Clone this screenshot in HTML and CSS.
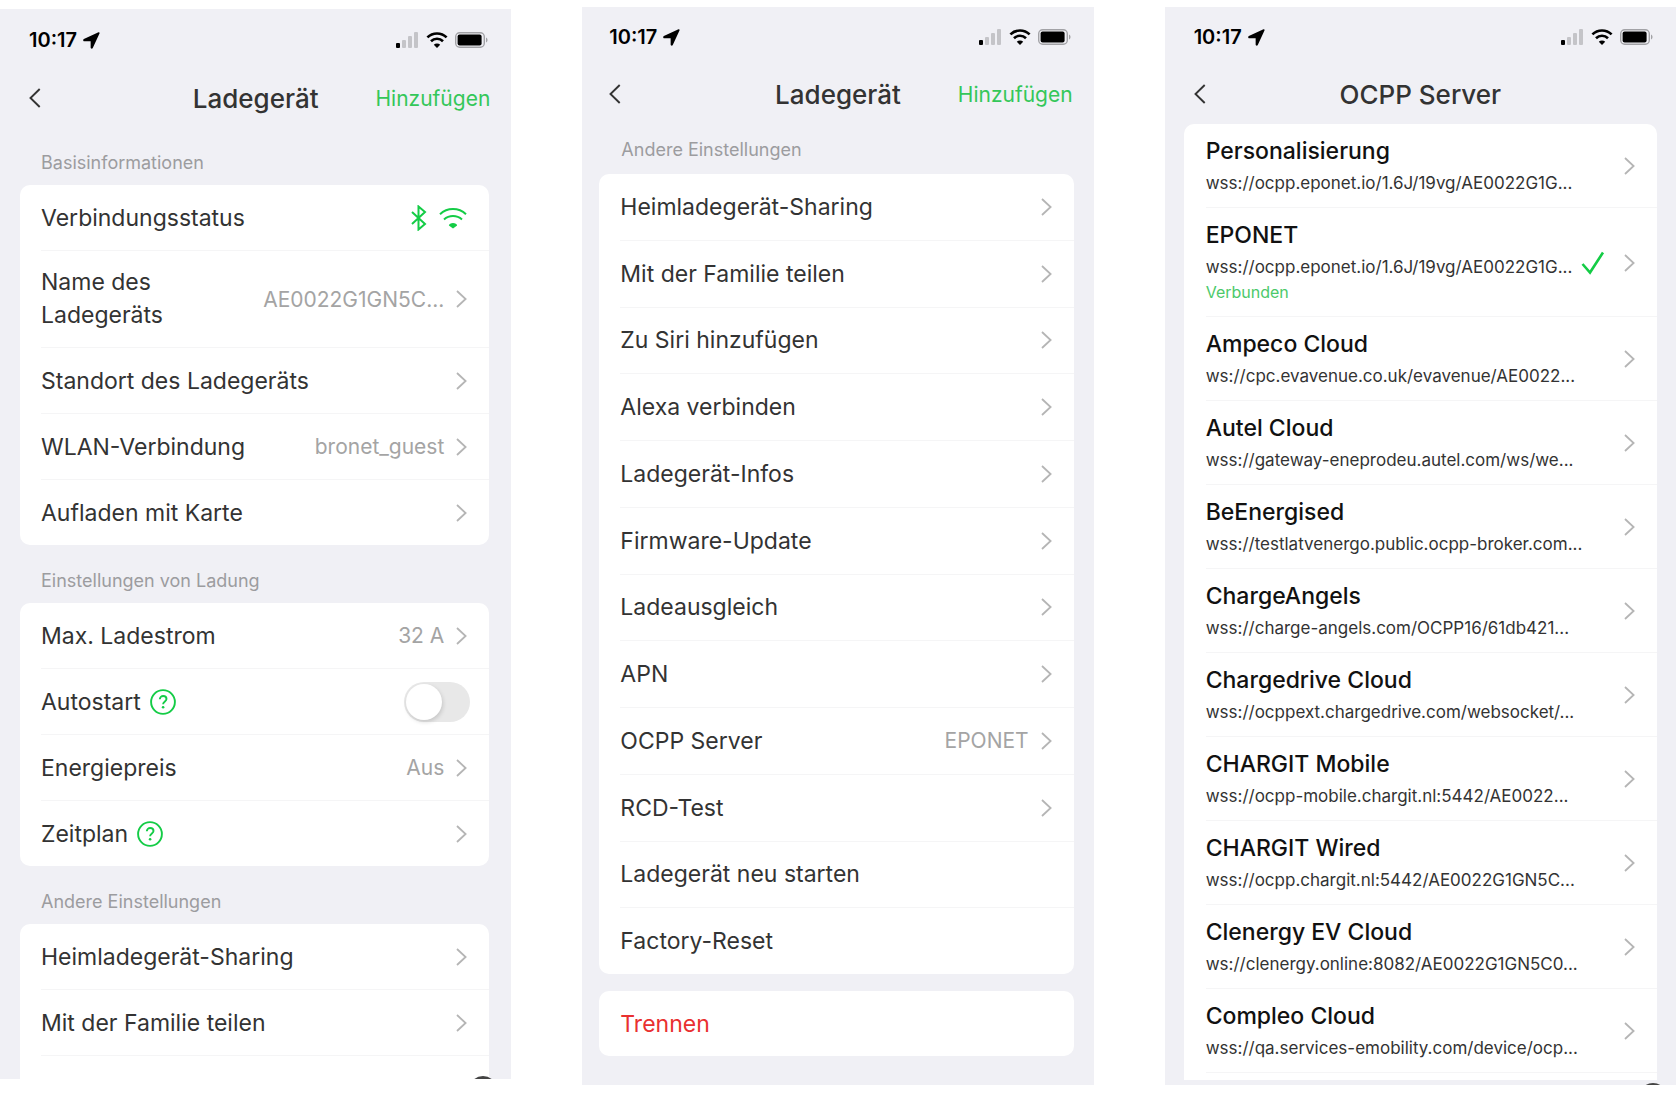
FILE: index.html
```html
<!DOCTYPE html>
<html lang="de">
<head>
  <meta charset="UTF-8">
  <meta name="viewport" content="width=device-width, initial-scale=1.0">
  <title>Ladegerät</title>
  <link rel="stylesheet" href="styles.css">
</head>
<body>
  <!-- shared icons -->
  <svg class="sprite" aria-hidden="true">
    <symbol id="arrow" viewBox="0 0 16 16"><path d="M14.600.3.8 6.700c-1 .5-.8 1.900.4 1.900h6v6.100c0 1.200 1.500 1.500 2 .4l6.300-13.700c.4-.8-.2-1.400-.9-1.100z"/></symbol>
    <symbol id="signal" viewBox="0 0 23 16">
      <rect x="0" y="11" width="4" height="5" rx="1"/>
      <g fill="#c4c4c8"><rect x="6" y="8" width="4" height="8" rx="1"/><rect x="12" y="4" width="4" height="12" rx="1"/><rect x="18" y="0" width="4" height="16" rx="1"/></g>
    </symbol>
    <symbol id="wifi" viewBox="0 0 22 16">
      <path d="M1.4 5.4a13.6 13.6 0 0 1 19.2 0M5 9.2a8.6 8.6 0 0 1 12 0" fill="none" stroke="currentColor" stroke-width="2.6"/>
      <path d="M11 16l-3.2-3.3a4.6 4.6 0 0 1 6.4 0z"/>
    </symbol>
    <symbol id="battery" viewBox="0 0 33 16">
      <rect x=".7" y=".7" width="28.6" height="14.6" rx="4" fill="none" stroke="#a2a2a6" stroke-width="1.4"/>
      <rect x="2.6" y="2.6" width="24" height="10.8" rx="2"/>
      <path d="M31 5.5c2 .8 2 4.2 0 5z" fill="#a2a2a6"/>
    </symbol>
    <symbol id="back" viewBox="0 0 12 20"><path d="M10.7 1 1.5 10l9.2 9" fill="none" stroke="currentColor" stroke-width="1.9"/></symbol>
    <symbol id="chevron" viewBox="0 0 11 18"><path d="M1 1l8.6 8L1 17" fill="none" stroke="currentColor" stroke-width="1.8"/></symbol>
    <symbol id="bluetooth" viewBox="0 0 16 26"><path d="M1 7l13 12-6.500 5.500V1.500L14 7 1 19" fill="none" stroke="currentColor" stroke-width="2"/></symbol>
    <symbol id="wlan" viewBox="0 0 28 22">
      <path d="M1 7.2a19 19 0 0 1 26 0M5 12.4a13.4 13.4 0 0 1 18 0" fill="none" stroke="currentColor" stroke-width="2"/>
      <path d="M14 21.5 9.900 18.500c0-3.500 8.200-3.500 8.200 0z"/>
    </symbol>
    <symbol id="help" viewBox="0 0 26 26">
      <circle cx="13" cy="13" r="11.9" fill="none" stroke="currentColor" stroke-width="1.9"/>
      <path d="M9.800 10.300c0-4.400 6.700-4.200 6.700-.2 0 2.300-3.400 2.500-3.400 5.200" fill="none" stroke="currentColor" stroke-width="1.9"/>
      <circle cx="13.100" cy="18.300" r="1.300"/>
    </symbol>
    <symbol id="check" viewBox="0 0 24 24"><path d="M1.500 13 9 21.500 22 1.500" fill="none" stroke="currentColor" stroke-width="2.600"/></symbol>
  </svg>

  <main class="screens">

    <section class="screen screen-charger">
      <div class="status-bar">
        <span class="time">10:17</span>
        <svg class="icon-arrow"><use href="#arrow"/></svg>
        <svg class="icon-signal"><use href="#signal"/></svg>
        <svg class="icon-wifi"><use href="#wifi"/></svg>
        <svg class="icon-battery"><use href="#battery"/></svg>
      </div>
      <header class="nav">
        <button class="back" aria-label="Zurück"><svg><use href="#back"/></svg></button>
        <h1>Ladegerät</h1>
        <button class="add">Hinzufügen</button>
      </header>

      <h2>Basisinformationen</h2>
      <div class="card">
        <div class="row">
          <span class="label">Verbindungsstatus</span>
          <svg class="icon-bluetooth"><use href="#bluetooth"/></svg>
          <svg class="icon-wlan"><use href="#wlan"/></svg>
        </div>
        <a class="row row-tall" href="#"><span class="label">Name des Ladegeräts</span><span class="value">AE0022G1GN5C...</span><svg class="chevron"><use href="#chevron"/></svg></a>
        <a class="row" href="#"><span class="label">Standort des Ladegeräts</span><svg class="chevron"><use href="#chevron"/></svg></a>
        <a class="row" href="#"><span class="label">WLAN-Verbindung</span><span class="value">bronet_guest</span><svg class="chevron"><use href="#chevron"/></svg></a>
        <a class="row" href="#"><span class="label">Aufladen mit Karte</span><svg class="chevron"><use href="#chevron"/></svg></a>
      </div>

      <h2>Einstellungen von Ladung</h2>
      <div class="card">
        <a class="row" href="#"><span class="label">Max. Ladestrom</span><span class="value">32 A</span><svg class="chevron"><use href="#chevron"/></svg></a>
        <div class="row">
          <label for="autostart">Autostart</label>
          <button class="help" aria-label="Hilfe"><svg><use href="#help"/></svg></button>
          <input type="checkbox" class="switch" id="autostart">
        </div>
        <a class="row" href="#"><span class="label">Energiepreis</span><span class="value">Aus</span><svg class="chevron"><use href="#chevron"/></svg></a>
        <div class="row">
          <span>Zeitplan</span>
          <button class="help" aria-label="Hilfe"><svg><use href="#help"/></svg></button>
          <a class="go" href="#" aria-label="Zeitplan"><svg class="chevron"><use href="#chevron"/></svg></a>
        </div>
      </div>

      <h2>Andere Einstellungen</h2>
      <div class="card card-cut">
        <a class="row" href="#"><span class="label">Heimladegerät-Sharing</span><svg class="chevron"><use href="#chevron"/></svg></a>
        <a class="row" href="#"><span class="label">Mit der Familie teilen</span><svg class="chevron"><use href="#chevron"/></svg></a>
      </div>
      <span class="float-dot"></span>
    </section>

    <section class="screen screen-other">
      <div class="status-bar">
        <span class="time">10:17</span>
        <svg class="icon-arrow"><use href="#arrow"/></svg>
        <svg class="icon-signal"><use href="#signal"/></svg>
        <svg class="icon-wifi"><use href="#wifi"/></svg>
        <svg class="icon-battery"><use href="#battery"/></svg>
      </div>
      <header class="nav">
        <button class="back" aria-label="Zurück"><svg><use href="#back"/></svg></button>
        <h1>Ladegerät</h1>
        <button class="add">Hinzufügen</button>
      </header>

      <h2>Andere Einstellungen</h2>
      <div class="card card-fill">
        <a class="row" href="#"><span class="label">Heimladegerät-Sharing</span><svg class="chevron"><use href="#chevron"/></svg></a>
        <a class="row" href="#"><span class="label">Mit der Familie teilen</span><svg class="chevron"><use href="#chevron"/></svg></a>
        <a class="row" href="#"><span class="label">Zu Siri hinzufügen</span><svg class="chevron"><use href="#chevron"/></svg></a>
        <a class="row" href="#"><span class="label">Alexa verbinden</span><svg class="chevron"><use href="#chevron"/></svg></a>
        <a class="row" href="#"><span class="label">Ladegerät-Infos</span><svg class="chevron"><use href="#chevron"/></svg></a>
        <a class="row" href="#"><span class="label">Firmware-Update</span><svg class="chevron"><use href="#chevron"/></svg></a>
        <a class="row" href="#"><span class="label">Ladeausgleich</span><svg class="chevron"><use href="#chevron"/></svg></a>
        <a class="row" href="#"><span class="label">APN</span><svg class="chevron"><use href="#chevron"/></svg></a>
        <a class="row" href="#"><span class="label">OCPP Server</span><span class="value">EPONET</span><svg class="chevron"><use href="#chevron"/></svg></a>
        <a class="row" href="#"><span class="label">RCD-Test</span><svg class="chevron"><use href="#chevron"/></svg></a>
        <button class="row">Ladegerät neu starten</button>
        <button class="row">Factory-Reset</button>
      </div>
      <div class="card card-danger">
        <button class="row">Trennen</button>
      </div>
    </section>

    <section class="screen screen-servers">
      <div class="status-bar">
        <span class="time">10:17</span>
        <svg class="icon-arrow"><use href="#arrow"/></svg>
        <svg class="icon-signal"><use href="#signal"/></svg>
        <svg class="icon-wifi"><use href="#wifi"/></svg>
        <svg class="icon-battery"><use href="#battery"/></svg>
      </div>
      <header class="nav">
        <button class="back" aria-label="Zurück"><svg><use href="#back"/></svg></button>
        <h1>OCPP Server</h1>
      </header>

      <div class="card card-servers">
        <a class="server" href="#">
          <div class="info"><strong>Personalisierung</strong><span>wss://ocpp.eponet.io/1.6J/19vg/AE0022G1G...</span></div>
          <svg class="chevron"><use href="#chevron"/></svg>
        </a>
        <a class="server" href="#">
          <div class="info"><strong>EPONET</strong><span>wss://ocpp.eponet.io/1.6J/19vg/AE0022G1G...</span><em>Verbunden</em></div>
          <svg class="icon-check"><use href="#check"/></svg>
          <svg class="chevron"><use href="#chevron"/></svg>
        </a>
        <a class="server" href="#">
          <div class="info"><strong>Ampeco Cloud</strong><span>ws://cpc.evavenue.co.uk/evavenue/AE0022...</span></div>
          <svg class="chevron"><use href="#chevron"/></svg>
        </a>
        <a class="server" href="#">
          <div class="info"><strong>Autel Cloud</strong><span>wss://gateway-eneprodeu.autel.com/ws/we...</span></div>
          <svg class="chevron"><use href="#chevron"/></svg>
        </a>
        <a class="server" href="#">
          <div class="info"><strong>BeEnergised</strong><span>wss://testlatvenergo.public.ocpp-broker.com...</span></div>
          <svg class="chevron"><use href="#chevron"/></svg>
        </a>
        <a class="server" href="#">
          <div class="info"><strong>ChargeAngels</strong><span>wss://charge-angels.com/OCPP16/61db421...</span></div>
          <svg class="chevron"><use href="#chevron"/></svg>
        </a>
        <a class="server" href="#">
          <div class="info"><strong>Chargedrive Cloud</strong><span>wss://ocppext.chargedrive.com/websocket/...</span></div>
          <svg class="chevron"><use href="#chevron"/></svg>
        </a>
        <a class="server" href="#">
          <div class="info"><strong>CHARGIT Mobile</strong><span>wss://ocpp-mobile.chargit.nl:5442/AE0022...</span></div>
          <svg class="chevron"><use href="#chevron"/></svg>
        </a>
        <a class="server" href="#">
          <div class="info"><strong>CHARGIT Wired</strong><span>wss://ocpp.chargit.nl:5442/AE0022G1GN5C...</span></div>
          <svg class="chevron"><use href="#chevron"/></svg>
        </a>
        <a class="server" href="#">
          <div class="info"><strong>Clenergy EV Cloud</strong><span>ws://clenergy.online:8082/AE0022G1GN5C0...</span></div>
          <svg class="chevron"><use href="#chevron"/></svg>
        </a>
        <a class="server" href="#">
          <div class="info"><strong>Compleo Cloud</strong><span>wss://qa.services-emobility.com/device/ocp...</span></div>
          <svg class="chevron"><use href="#chevron"/></svg>
        </a>
      </div>
      <span class="float-dot"></span>
    </section>

  </main>
</body>
</html>
```
FILE: styles.css
```css
* {
  box-sizing: border-box;
}
body {
  margin: 0;
  background: #fff;
  color: #333;
  font-family: Inter, "Liberation Sans", sans-serif;
  font-size: 23px;
}
a {
  color: inherit;
  text-decoration: none;
}
button {
  padding: 0;
  border: none;
  background: none;
  color: inherit;
  font: inherit;
  text-align: left;
  cursor: pointer;
}
svg {
  display: block;
  flex: none;
  fill: currentColor;
}
.sprite {
  position: absolute;
  width: 0;
  height: 0;
}

/* three phones side by side */
.screens {
  display: grid;
  grid-template-columns: repeat(3, minmax(0, 1fr));
  align-items: start;
  column-gap: 71px;
  padding: 7px 4px 10px 0;
}
.screen {
  position: relative;
  display: flex;
  flex-direction: column;
  overflow: hidden;
  background: #f0f0f5;
}
.screen-charger {
  margin-top: 2px;
}
.screen-other {
  align-self: stretch;
  padding-bottom: 29px;
}
.screen-servers {
  padding-bottom: 5px;
}

/* status bar */
.status-bar {
  display: flex;
  align-items: center;
  height: 60px;
  padding: 0 23px 0 29px;
  color: #000;
}
.screen-charger .status-bar {
  height: 62px;
}
.screen-other .status-bar {
  padding-left: 27px;
}
.time {
  font-size: 20px;
  font-weight: 600;
}
.icon-arrow {
  width: 17px;
  height: 17px;
  margin: 0 auto 0 6px;
}
.icon-signal {
  width: 23px;
  height: 16px;
}
.icon-wifi {
  width: 22px;
  height: 16px;
  margin: 0 7px;
}
.icon-battery {
  width: 33px;
  height: 16px;
}

/* title bar */
.nav {
  display: grid;
  grid-template-columns: 1fr auto 1fr;
  align-items: center;
  height: 54px;
  padding: 0 21px;
}
.nav h1 {
  margin: 0;
  font-size: 26px;
  font-weight: 500;
}
.back {
  justify-self: start;
  margin-left: 8px;
}
.screen-other .back {
  margin-left: 6px;
}
.back svg {
  width: 12px;
  height: 20px;
}
.add {
  justify-self: end;
  color: #34c759;
  font-size: 21px;
}

h2 {
  margin: 0;
  padding: 24px 41px 10px;
  color: #9c9c9f;
  font-size: 18px;
  font-weight: 400;
  line-height: 24px;
}
.nav + h2 {
  padding-top: 26px;
}
.screen-other .nav + h2 {
  padding: 17px 39px 12px;
}

/* cards and rows */
.card {
  margin: 0 22px 0 20px;
  border-radius: 10px;
  background: #fff;
}
.screen-other .card {
  margin: 0 20px 0 17px;
}
.row {
  display: flex;
  align-items: center;
  width: calc(100% - 21px);
  min-height: 66px;
  margin-left: 21px;
  padding-right: 22px;
  border-bottom: 1px solid #f5f5f6;
}
.row:last-child {
  min-height: 65px;
  border-bottom: none;
}
.row-tall {
  min-height: 97px;
  line-height: 33px;
}
.row-tall .label {
  max-width: 160px;
}
.label {
  margin-right: auto;
}
.value {
  margin-right: 12px;
  color: #a4a4a4;
  font-size: 21px;
}
.chevron {
  width: 11px;
  height: 18px;
  color: #b5b5b5;
}
.go {
  margin-left: auto;
}
.icon-bluetooth {
  width: 16px;
  height: 26px;
  margin-right: 12px;
  color: #14cc46;
}
.icon-wlan {
  width: 28px;
  height: 22px;
  color: #14cc46;
}
.help {
  margin-left: 9px;
  color: #14cc46;
}
.help svg {
  width: 26px;
  height: 26px;
}
.switch {
  appearance: none;
  display: flex;
  width: 66px;
  height: 40px;
  margin: 0 -3px 0 auto;
  padding: 2px;
  border-radius: 20px;
  background: #e8e8e8;
  cursor: pointer;
}
.switch::before {
  content: "";
  width: 36px;
  height: 36px;
  border-radius: 50%;
  background: #fff;
  box-shadow: 1px 2px 4px rgba(0, 0, 0, 0.15);
}
.switch:checked {
  justify-content: flex-end;
  background: #14cc46;
}
.card-cut {
  padding-bottom: 23px;
  border-radius: 10px 10px 0 0;
}
.card-cut .row:last-child {
  min-height: 66px;
  border-bottom: 1px solid #f5f5f6;
}
.card-fill {
  display: flex;
  flex: 1;
  flex-direction: column;
}
.card-fill .row {
  flex: 1;
}
.screen-other .card-danger {
  margin-top: 17px;
  color: #e93030;
}

/* server list */
.card-servers {
  margin: 3px 19px 0 19px;
  padding-bottom: 7px;
  border-radius: 10px 10px 0 0;
}
.server {
  display: flex;
  align-items: center;
  margin-left: 22px;
  padding: 12px 22px 11px 0;
  border-bottom: 1px solid #f5f5f6;
}
.info {
  display: flex;
  flex: 1;
  flex-direction: column;
  gap: 4px;
  white-space: nowrap;
}
.info strong {
  color: #111;
  font-weight: 500;
  line-height: 30px;
}
.info span {
  font-size: 17px;
  line-height: 26px;
}
.info em {
  margin-top: -4px;
  color: #4cc96a;
  font-size: 16px;
  font-style: normal;
  line-height: 25px;
}
.icon-check {
  width: 24px;
  height: 24px;
  margin-right: 19px;
  color: #14cc46;
}

/* floating assist button, only its top edge shows */
.float-dot {
  position: absolute;
  right: 14px;
  bottom: -25px;
  width: 28px;
  height: 28px;
  border-radius: 50%;
  background: #444;
}
.screen-servers .float-dot {
  right: 9px;
  bottom: -26px;
}
```
